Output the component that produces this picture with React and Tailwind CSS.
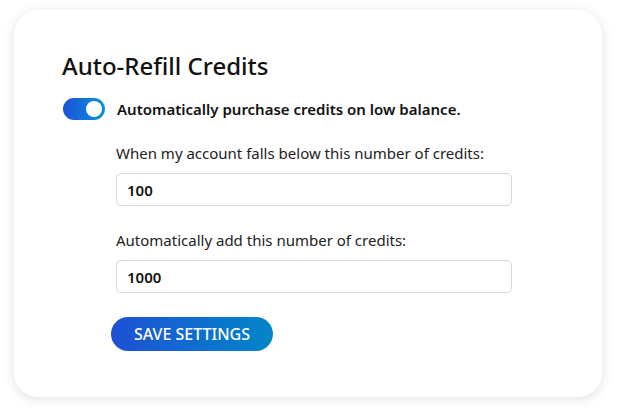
import React, { useState } from "react";

const font = { fontFamily: '"Noto Sans", "Open Sans", sans-serif' };

const Toggle = ({ on, onChange }) => (
  <button
    onClick={() => onChange(!on)}
    className={`relative h-[22px] w-[42px] shrink-0 rounded-full ${
      on ? "bg-gradient-to-r from-[#1d4fd6] to-[#0b93dc]" : "bg-gray-300"
    }`}
  >
    <span
      className={`absolute top-[3px] h-4 w-4 rounded-full bg-white ${
        on ? "left-[23px]" : "left-[3px]"
      }`}
    />
  </button>
);

export default function App() {
  const [auto, setAuto] = useState(true);
  const [below, setBelow] = useState("100");
  const [add, setAdd] = useState("1000");

  return (
    <div className="min-h-screen bg-white pt-[10px] pl-[14px]" style={font}>
      <div className="w-[588px] h-[387px] rounded-[24px] bg-white shadow-[0_2px_12px_rgba(0,0,0,0.12)] pt-[41px] pl-[48px]">
        <h1 className="text-[24px] leading-[30px] text-[#111] font-medium">
          Auto-Refill Credits
        </h1>

        <div className="mt-[17px] flex items-center gap-[12px] h-[22px] pl-[1px]">
          <Toggle on={auto} onChange={setAuto} />
          <span className="text-[15px] leading-[20px] font-semibold text-[#111]">
            Automatically purchase credits on low balance.
          </span>
        </div>

        <div className="ml-[54px] w-[396px]">
          <label className="mt-[23px] block text-[15px] leading-[20px] text-[#222]">
            When my account falls below this number of credits:
          </label>
          <input
            value={below}
            onChange={(e) => setBelow(e.target.value)}
            className="mt-[10px] block h-[33px] w-full rounded-[5px] border border-[#d6d6d6] px-[10px] text-[15px] font-semibold text-[#111] outline-none"
            style={font}
          />

          <label className="mt-[24px] block text-[15px] leading-[20px] text-[#222]">
            Automatically add this number of credits:
          </label>
          <input
            value={add}
            onChange={(e) => setAdd(e.target.value)}
            className="mt-[10px] block h-[33px] w-full rounded-[5px] border border-[#d6d6d6] px-[10px] text-[15px] font-semibold text-[#111] outline-none"
            style={font}
          />
        </div>

        <button className="mt-[24px] ml-[49px] h-[34px] w-[162px] rounded-full bg-gradient-to-r from-[#1e4fd4] to-[#0385c8] text-[16px] font-medium text-white">
          SAVE SETTINGS
        </button>
      </div>
    </div>
  );
}
